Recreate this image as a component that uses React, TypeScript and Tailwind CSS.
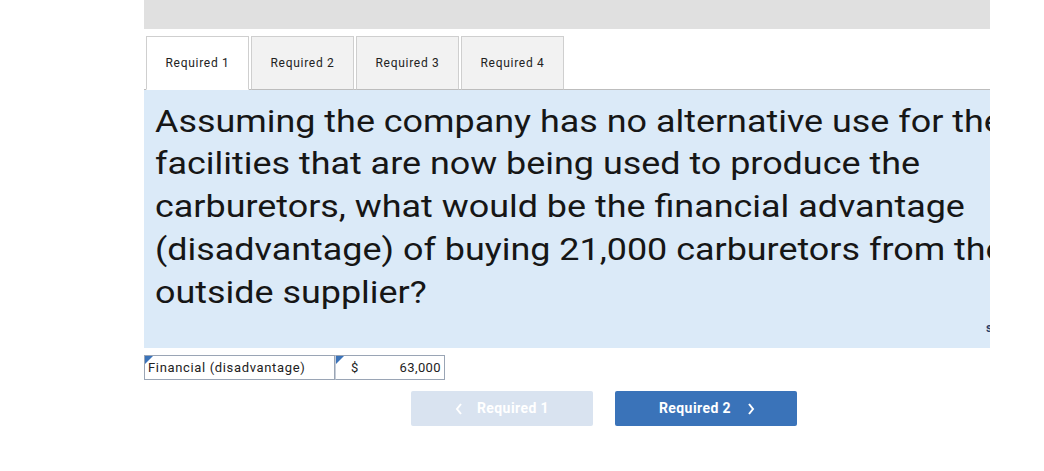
import React from "react";

const Marker = () => (
  <span className="absolute left-0 top-0 w-0 h-0 border-t-[8px] border-t-[#3b73b9] border-r-[8px] border-r-transparent" />
);

export default function App() {
  const tabs = ["Required 1", "Required 2", "Required 3", "Required 4"];
  return (
    <div className="w-[1044px] h-[471px] bg-white overflow-hidden" style={{ fontFamily: "Roboto, sans-serif" }}>
      <div className="ml-[144px] w-[846px]">
        <div className="h-[29px] bg-[#e0e0e0]" />
        <div className="flex gap-[2px] mt-[7px] pl-[2px] relative z-10">
          {tabs.map((t, i) => (
            <div
              key={t}
              className={
                "w-[103px] h-[54px] flex items-center justify-center text-[12px] tracking-[0.06em] text-[#222] border border-[#cfcfcf] " +
                (i === 0 ? "bg-white border-b-white" : "bg-[#f2f2f2] border-b-[#bdbdbd]")
              }
            >
              {t}
            </div>
          ))}
        </div>
        <div className="relative -mt-[1px] h-[259px] bg-[#dbeaf8] border-t border-[#bdbdbd] overflow-hidden">
          <p className="pl-[9.5px] pt-[10.5px] text-[31px] leading-[42.75px] text-[#161616] whitespace-nowrap origin-left scale-x-[1.158]">
            Assuming the company has no alternative use for the
            <br />
            facilities that are now being used to produce the
            <br />
            carburetors, what would be the financial advantage
            <br />
            (disadvantage) of buying 21,000 carburetors from the
            <br />
            outside supplier?
          </p>
          <span className="absolute left-[842px] top-[229px] text-[12px] font-bold text-[#2c3e6a]">s</span>
        </div>
        <div className="flex mt-[7px] h-[25px]">
          <div className="relative w-[191px] border border-[#9aa5b5] flex items-center pl-[3px] text-[13px] tracking-[0.05em] text-[#222]">
            <Marker />
            Financial (disadvantage)
          </div>
          <div className="relative w-[110px] border border-[#9aa5b5] border-l-[#c8ced8] flex items-center justify-between pl-[15px] pr-[3px] text-[13px] tracking-[0.03em] text-[#222]">
            <Marker />
            <span>$</span>
            <span>63,000</span>
          </div>
        </div>
        <div className="flex ml-[267px] mt-[11px] gap-[22px]">
          <div className="w-[182px] h-[35px] bg-[#d9e3f0] rounded-[2px] flex items-center justify-center gap-[14px] text-white text-[14px] tracking-[0.03em] font-bold">
            <svg width="8" height="12" viewBox="0 0 8 12"><path d="M6 1L2 6l4 5" stroke="white" strokeWidth="2" fill="none" /></svg>
            <span>Required 1</span>
          </div>
          <div className="w-[182px] h-[35px] bg-[#3a73b9] rounded-[2px] flex items-center justify-center gap-[16px] text-white text-[14px] tracking-[0.03em] font-bold pl-[2px]">
            <span>Required 2</span>
            <svg width="8" height="12" viewBox="0 0 8 12"><path d="M2 1l4 5-4 5" stroke="white" strokeWidth="2" fill="none" /></svg>
          </div>
        </div>
      </div>
    </div>
  );
}
